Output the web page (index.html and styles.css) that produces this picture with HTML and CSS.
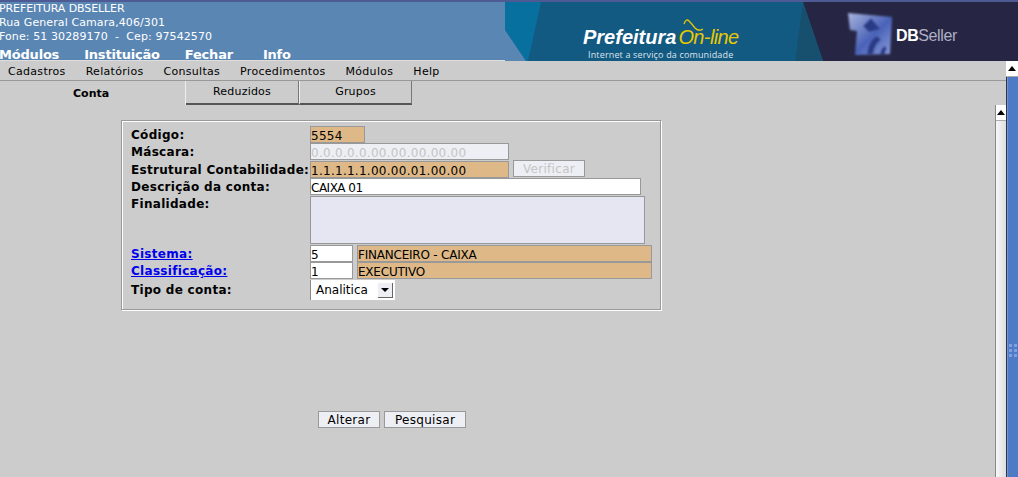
FILE: index.html
```html
<!DOCTYPE html>
<html>
  <head>
    <meta charset="UTF-8">
    <title>Prefeitura On-line | Conta</title>
    <link rel="stylesheet" href="styles.css">
  </head>
  <body>
    <div id="topo">
      <div class="topo-dados">
        <div class="inst">
          <p class="nome">PREFEITURA DBSELLER</p>
          <p>Rua General Camara,406/301</p>
          <p>Fone: 51 30289170 &nbsp;-&nbsp; Cep: 97542570</p>
        </div>
        <div class="menu-topo">
          <a>Módulos</a><a>Instituição</a><a>Fechar</a><a>Info</a>
        </div>
      </div>
      <div class="topo-banner">
        <svg class="banner-fundo" width="513" height="59" viewBox="0 0 513 59">
          <defs>
            <linearGradient id="cubo" x1="0" y1="0" x2="1" y2="1">
              <stop offset="0" stop-color="#a9b6de"/>
              <stop offset="0.55" stop-color="#4a62b8"/>
              <stop offset="1" stop-color="#8c9edb"/>
            </linearGradient>
            <filter id="borrar"><feGaussianBlur stdDeviation="0.8"/></filter>
          </defs>
          <rect width="513" height="59" fill="#135a82"/>
          <polygon points="0,0 36,0 23,59 21,59 0,28" fill="#07709f"/>
          <polygon points="0,28 21,59 0,59" fill="#5a86b4"/>
          <polygon points="298,0 513,0 513,59 318,59" fill="#262644"/>
          <polygon points="298,0 318,59 290,59" fill="#17506f"/>
          <g filter="url(#borrar)">
            <polygon points="343,11 387,15 385,52 350,53 352,29 345,28" fill="url(#cubo)"/>
            <polygon points="358,24 366,16 375,27 364,30" fill="#2c3a86"/>
            <path d="M362 52 q2 -14 10 -18 l4 4 q-6 3 -8 14z" fill="#2c3a86"/>
            <path d="M375 52 q1 -6 5 -8 l2 3 q-2 1 -2 5z" fill="#2c3a86"/>
          </g>
          <path d="M179 22 Q181 16 184 19 Q187 22 190 26 Q194 30 198 27" fill="none" stroke="#e8c800" stroke-width="1.3"/>
        </svg>
        <div class="logo-pref">
          <div class="logo-nome"><span class="pref">Prefeitura</span><span class="online">On-line</span></div>
          <div class="logo-sub">Internet a serviço da comunidade</div>
        </div>
        <div class="logo-db"><b>DB</b>Seller</div>
      </div>
    </div>

    <div id="corpo">
      <div id="janela">
        <div class="menubar">
          <a>Cadastros</a><a>Relatórios</a><a>Consultas</a><a>Procedimentos</a><a>Módulos</a><a>Help</a>
        </div>
        <div class="abas">
          <div class="aba ativa">Conta</div>
          <div class="aba">Reduzidos</div>
          <div class="aba">Grupos</div>
        </div>
        <div id="quadro">
          <div class="conteudo">
            <div class="caixa">
              <div class="linha h17">
                <label>Código:</label>
                <input class="ro w55 num" value="5554">
              </div>
              <div class="linha h18">
                <label>Máscara:</label>
                <input class="off w199 num" value="0.0.0.0.0.00.00.00.00.00">
              </div>
              <div class="linha h17">
                <label>Estrutural Contabilidade:</label>
                <input class="ro w199 num" value="1.1.1.1.1.00.00.01.00.00">
                <button class="btn-off">Verificar</button>
              </div>
              <div class="linha h18">
                <label>Descrição da conta:</label>
                <input class="w331 desc" value="CAIXA 01">
              </div>
              <div class="linha h49">
                <label>Finalidade:</label>
                <textarea></textarea>
              </div>
              <div class="linha h17">
                <label><a href="#">Sistema:</a></label>
                <input class="w43" value="5">
                <input class="ro w295 txt" value="FINANCEIRO - CAIXA">
              </div>
              <div class="linha h18">
                <label><a href="#">Classificação:</a></label>
                <input class="w43" value="1">
                <input class="ro w295 txt" value="EXECUTIVO">
              </div>
              <div class="linha tipo">
                <label>Tipo de conta:</label>
                <div class="select"><span>Analitica</span><i class="seta"><b></b></i></div>
              </div>
            </div>
            <div class="botoes">
              <button>Alterar</button>
              <button>Pesquisar</button>
            </div>
          </div>
          <div class="scroll-interno"><div class="seta-cima"><b></b></div></div>
        </div>
      </div>
      <div class="scroll-externo">
        <div class="seta-cima"><b></b></div>
        <div class="trilho"><div class="pegador"><i></i><i></i><i></i><i></i><i></i><i></i></div></div>
      </div>
    </div>
  </body>
</html>
```

FILE: styles.css
```css
html, body { margin: 0; height: 100%; overflow: hidden; }
body { font: 11px "DejaVu Sans", sans-serif; color: #000; background: #ccc; }
p { margin: 0; }

#topo { display: flex; height: 59px; border-top: 2px solid #4d5a94; background: #5a86b4; }
.topo-dados { width: 505px; color: #fff; overflow: hidden; }
.inst { margin-left: -1px; }
.inst p { height: 14px; line-height: 14px; font-size: 11px; letter-spacing: 0.1px; }
.inst p.nome { letter-spacing: -0.1px; }
.menu-topo { display: flex; margin: 3px 0 0 -1px; font-size: 13px; line-height: 15px; font-weight: bold; letter-spacing: -0.2px; }
.menu-topo a { margin-right: 25px; }
.menu-topo a:nth-child(3) { margin-right: 30px; }

.topo-banner { position: relative; flex: 1; overflow: hidden; }
.banner-fundo { display: block; }
.logo-pref { position: absolute; left: 78px; top: 24px; width: 170px; color: #fff; }
.logo-nome { height: 22px; line-height: 22px; white-space: nowrap; }
.pref { font: italic bold 20px "Liberation Sans", sans-serif; }
.online { margin-left: 2px; font: italic 20px "Liberation Sans", sans-serif; color: #e8c800; letter-spacing: -0.6px; }
.logo-sub { margin: 1px 0 0 5px; font: 9px "Open Sans", sans-serif; line-height: 11px; letter-spacing: 0.15px; color: #dde3ea; white-space: nowrap; }
.logo-db { position: absolute; left: 391px; top: 25px; font: 16px "Liberation Sans", sans-serif; color: #aeb0c4; letter-spacing: -0.4px; }
.logo-db b { color: #fff; }

#corpo { display: flex; height: 416px; }
#janela { flex: 1; min-width: 0; display: flex; flex-direction: column; }

.menubar { display: flex; height: 19px; padding-left: 8px; line-height: 21px; border-bottom: 1px solid #999; border-top: 1px solid #ddd; margin-top: -1px; letter-spacing: 0.3px; }
.menubar a { margin-right: 20px; }

.abas { display: flex; height: 24px; letter-spacing: 0.2px; }
.aba { width: 112px; height: 22px; line-height: 22px; text-align: center; border-bottom: 2px solid #555; border-right: 1px solid #777; border-left: 1px solid #eee; }
.aba.ativa { width: 185px; height: 24px; font-weight: bold; line-height: 26px; border: 0; border-right: 1px solid #eee; text-align: left; text-indent: 73px; letter-spacing: 0; }
.aba + .aba + .aba { width: 111px; }
.aba.ativa + .aba { border-left: 0; }

#quadro { flex: 1; display: flex; min-height: 0; }
.conteudo { flex: 1; padding: 15px 0 0 121px; }
.caixa { width: 540px; height: 190px; padding: 5px 0 0; border: 1px solid #999; box-shadow: 1px 1px 0 #fff, inset 1px 1px 0 #fff; box-sizing: border-box; }

.linha { display: flex; align-items: flex-start; gap: 4px; }
.h17 { height: 17px; }
.h18 { height: 18px; }
.h49 { height: 49px; }
.linha label { width: 179px; margin-right: -4px; padding: 2px 0 0 9px; flex: none; font-size: 12px; font-weight: bold; letter-spacing: 0.3px; line-height: 15px; white-space: nowrap; }
.h49 label { padding-top: 1px; }
.tipo label { padding-top: 3px; }
.linha a { color: #00e; text-decoration: underline; }

input, textarea { margin: 0; padding: 2px 0 0; border: 1px solid #999; border-radius: 0; font: 12px "DejaVu Sans", sans-serif; color: #000; background: #fff; box-sizing: border-box; outline: 0; height: 17px; }
textarea { display: block; width: 335px; height: 48px; background: #e6e6f2; resize: none; }
.ro { background: #deb887; }
.off { background: #eeeff4; color: #c4c4c4; }
.num { letter-spacing: 0.27px; }
.txt { letter-spacing: -0.22px; }
.desc { letter-spacing: -0.5px; }
.w55 { width: 55px; }
.w199 { width: 199px; }
.w331 { width: 331px; }
.w43 { width: 43px; }
.w295 { width: 295px; }

.select { display: flex; align-items: center; width: 85px; height: 20px; box-sizing: border-box; border-left: 1px solid #888; background: #fff; font-size: 12px; padding-left: 5px; }
.select span { flex: 1; }
.seta { display: flex; align-items: center; justify-content: center; width: 15px; height: 15px; margin-right: 2px; background: #eeeff4; border-right: 1px solid #666; border-bottom: 1px solid #666; box-sizing: border-box; }
.seta b { border: 4px solid transparent; border-top: 4px solid #000; border-bottom: 0; }

button { margin: 0; padding: 0; height: 17px; border: 1px solid #999; background: #eeeff4; font: 12px "DejaVu Sans", sans-serif; letter-spacing: 0.3px; color: #000; }
.btn-off { width: 72px; margin-top: -1px; padding-top: 1px; color: #c4c4c4; }
.botoes { display: flex; gap: 4px; margin: 101px 0 0 197px; }
.botoes button:first-child { width: 62px; }
.botoes button:last-child { width: 82px; }

.scroll-interno { width: 10px; background: linear-gradient(to right, #f7f7f7, #ddd); border-left: 1px solid #888; margin-left: -1px; }
.seta-cima { display: flex; align-items: center; justify-content: center; height: 15px; background: #fff; border-bottom: 1px solid #aaa; }
.seta-cima b { border: 4px solid transparent; border-bottom: 5px solid #000; border-top: 0; }

.scroll-externo { width: 12px; display: flex; flex-direction: column; }
.trilho { flex: 1; padding: 267px 0 0 2px; background: #4f7bc6; border-left: 1px solid #333; box-shadow: inset 1px 0 0 #6b95dc; }
.pegador { display: grid; grid-template-columns: 3px 3px; gap: 2px; }
.pegador i { width: 3px; height: 3px; background: #7f9fe0; }
```
